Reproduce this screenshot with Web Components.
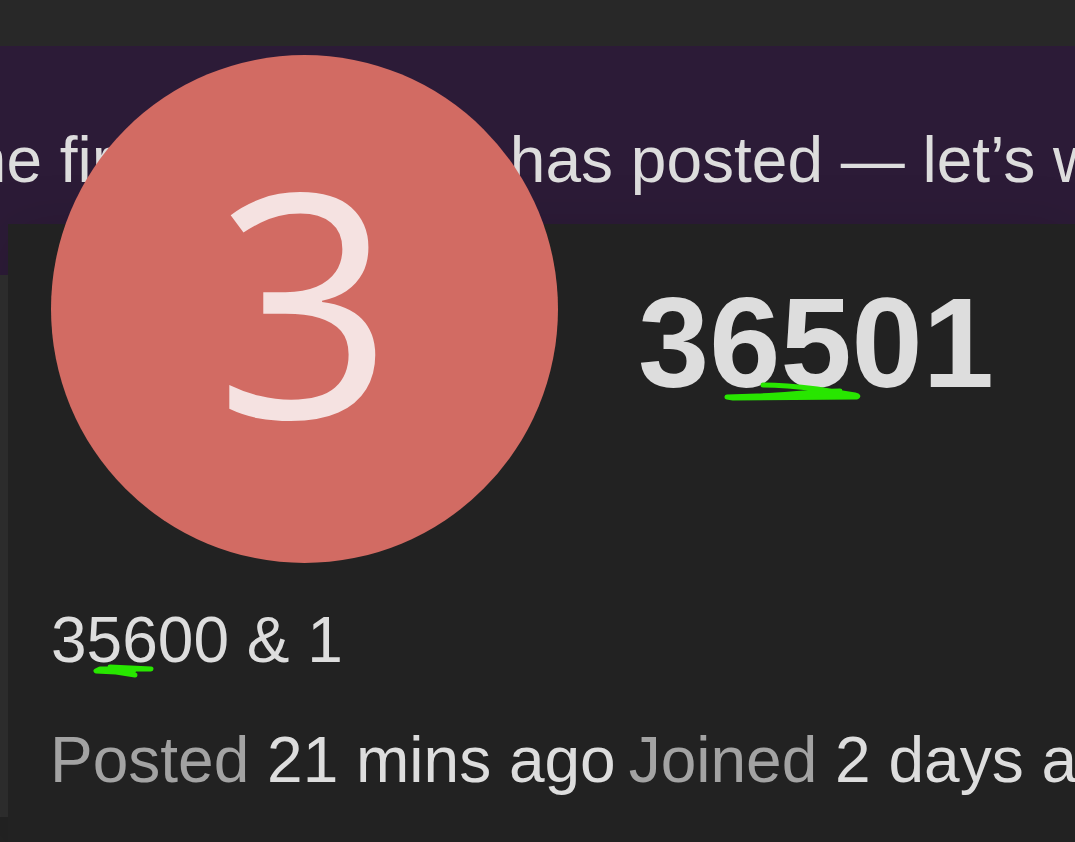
<!DOCTYPE html>
<html lang="en">
<head>
<meta charset="utf-8">
<title>User card</title>
<style>
html, body { margin: 0; }
body { background: #232323; font-family: "Liberation Sans", Arial, sans-serif; font-size: 64px; line-height: 72px; color: #ddd; overflow: hidden; }
</style>
</head>
<body>
<topic-page>
  <post-notice><span slot="lead">the first</span>has posted — let’s w</post-notice>
  <user-card slot="card">
    <letter-avatar slot="avatar">3</letter-avatar>
    <marked-text slot="name" kind="name">36501</marked-text>
    <marked-text slot="bio" kind="bio">35600 &amp; 1</marked-text>
    <meta-item slot="meta" label="Posted">21 mins ago</meta-item>
    <meta-item slot="meta" label="Joined">2 days ago</meta-item>
  </user-card>
</topic-page>
<script>
function define(name, html, setup) {
  const template = document.createElement('template');
  template.innerHTML = html;
  customElements.define(name, class extends HTMLElement {
    constructor() {
      super();
      this.attachShadow({ mode: 'open' }).append(template.content.cloneNode(true));
    }
    connectedCallback() { if (setup) setup(this); }
  });
}

define('topic-page', `
  <style>
    :host { display: flex; flex-direction: column; position: relative; min-height: 100vh; overflow: hidden; }
    header { height: 46px; background: #282828; }
    .rail { height: 542px; background: #2f2f2f; }
    .overlay { position: absolute; top: 224px; left: 8px; right: 0; bottom: 0; }
  </style>
  <header></header>
  <slot></slot>
  <div class="rail"></div>
  <div class="overlay"><slot name="card"></slot></div>
`);

define('post-notice', `
  <style>
    :host { display: block; box-sizing: border-box; height: 229px; padding-top: 78px; background: #2c1b37; overflow: hidden; }
    p { display: flex; gap: 347px; margin: 0 0 0 -47px; white-space: nowrap; }
  </style>
  <p><slot name="lead"></slot><span><slot></slot></span></p>
`);

define('user-card', `
  <style>
    :host { display: block; box-sizing: border-box; min-height: 100%; padding: 47px 0 46px 43px; background: #222; box-shadow: 0 4px 56px rgba(0, 0, 0, .12); }
    .top { display: flex; align-items: flex-start; gap: 80px; }
    h1 { margin: 0; font-size: 128px; line-height: 144px; font-weight: 700; }
    .bio { margin: 41px 0 48px; }
    .meta { display: flex; gap: 13px; margin-left: -1px; white-space: nowrap; }
  </style>
  <div class="top"><slot name="avatar"></slot><h1><slot name="name"></slot></h1></div>
  <div class="bio"><slot name="bio"></slot></div>
  <div class="meta"><slot name="meta"></slot></div>
`);

define('letter-avatar', `
  <style>
    :host { display: flex; flex: none; justify-content: center; box-sizing: border-box; width: 507px; height: 508px; padding-top: 42px; margin-top: -216px; border-radius: 50%; background: #d26b63; color: #f5e2e1; font: 500 312px/400px "Open Sans", "Noto Sans", sans-serif; }
  </style>
  <slot></slot>
`);

define('marked-text', `
  <style>
    :host { display: inline-block; position: relative; }
    svg { display: none; position: absolute; overflow: visible; fill: none; stroke: #28e600; stroke-linecap: round; stroke-linejoin: round; stroke-width: 5; }
    :host([kind="name"]) .name { display: block; left: 85px; top: 110px; }
    :host([kind="bio"]) .bio { display: block; left: 41px; top: 58px; }
  </style>
  <slot></slot>
  <svg class="name" width="138" height="20" aria-hidden="true">
    <path d="M40 4C62 4 78 6 94 8L132 14Q137 15 133 16L10 17L4 16L34 15C65 14 80 11 117 10"/>
    <path d="M76 13L98 10L112 12L126 15L100 15Z" fill="#28e600" stroke-width="3"/>
  </svg>
  <svg class="bio" width="62" height="16" aria-hidden="true">
    <path d="M18 5L59 7L8 7L4 9L24 10L43 13L18 7"/>
    <path d="M14 7L42 9" stroke-width="4"/>
  </svg>
`);

define('meta-item', `
  <style>
    :host { display: block; }
    .label { color: #a3a3a3; }
  </style>
  <span class="label"></span> <slot></slot>
`, el => { el.shadowRoot.querySelector('.label').textContent = el.getAttribute('label'); });
</script>
</body>
</html>
